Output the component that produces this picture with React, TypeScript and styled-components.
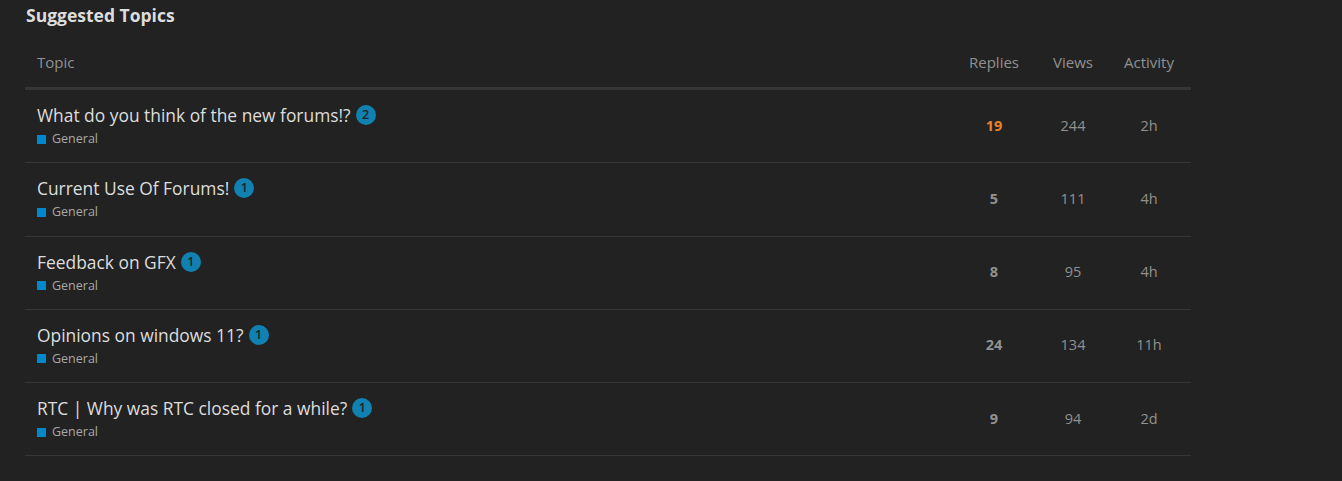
import React from 'react';
import styled, { createGlobalStyle } from 'styled-components';

interface Topic {
  title: string;
  badge: number;
  category: string;
  replies: number;
  views: number;
  activity: string;
  hot?: boolean;
}

const topics: Topic[] = [
  { title: 'What do you think of the new forums!?', badge: 2, category: 'General', replies: 19, views: 244, activity: '2h', hot: true },
  { title: 'Current Use Of Forums!', badge: 1, category: 'General', replies: 5, views: 111, activity: '4h' },
  { title: 'Feedback on GFX', badge: 1, category: 'General', replies: 8, views: 95, activity: '4h' },
  { title: 'Opinions on windows 11?', badge: 1, category: 'General', replies: 24, views: 134, activity: '11h' },
  { title: 'RTC | Why was RTC closed for a while?', badge: 1, category: 'General', replies: 9, views: 94, activity: '2d' },
];

const GlobalStyle = createGlobalStyle`
  html, body {
    margin: 0;
    background: #222222;
  }
  body {
    font-family: "Open Sans", Lato, "Noto Sans", sans-serif;
    color: #dddddd;
  }
`;

const Wrapper = styled.div`
  padding: 5px 0 0 25px;
  width: 1166px;
`;

const Heading = styled.h3`
  margin: 0 0 0 1px;
  font-size: 17.5px;
  line-height: 20px;
  font-weight: 700;
  color: #dddddd;
`;

const Row = styled.div<{ $head?: boolean }>`
  display: grid;
  grid-template-columns: 1fr 80px 78px 79px;
  align-items: center;
  border-bottom: ${p => (p.$head ? '3px solid #363636' : '1px solid #363636')};
`;

const HeadCell = styled.div<{ $first?: boolean; $shift?: number }>`
  padding: 27px ${p => p.$shift ?? 0}px 15px ${p => (p.$first ? 12 : 0)}px;
  text-align: ${p => (p.$first ? 'left' : 'center')};
  font-size: 15px;
  line-height: 20px;
  color: #919191;
`;

const TopicCell = styled.div`
  padding: 14px 12px 14.25px;
`;

const TitleLine = styled.div`
  display: flex;
  align-items: center;
  gap: 5px;
  font-size: 17.4px;
  line-height: 22px;
  color: #dddddd;
`;

const Badge = styled.span`
  display: inline-flex;
  align-items: center;
  justify-content: center;
  width: 20px;
  height: 20px;
  border-radius: 50%;
  background: #1081b0;
  color: #222222;
  font-size: 12.5px;
  font-weight: 600;
`;

const Category = styled.div`
  margin-top: 4px;
  display: flex;
  align-items: center;
  gap: 6px;
  font-size: 12.5px;
  line-height: 18px;
  color: #a8a8a8;
`;

const Swatch = styled.span`
  width: 9px;
  height: 9px;
  background: #0088cc;
`;

const NumCell = styled.div<{ $bold?: boolean; $hot?: boolean; $shift?: number }>`
  text-align: center;
  font-size: 14.5px;
  font-weight: ${p => (p.$bold ? 700 : 400)};
  color: ${p => (p.$hot ? '#e8812b' : '#919191')};
  padding-bottom: 2px;
  padding-right: ${p => p.$shift ?? 0}px;
`;

export default function App() {
  return (
    <>
      <GlobalStyle />
      <Wrapper>
        <Heading>Suggested Topics</Heading>
        <Row $head>
          <HeadCell $first>Topic</HeadCell>
          <HeadCell>Replies</HeadCell>
          <HeadCell>Views</HeadCell>
          <HeadCell $shift={5}>Activity</HeadCell>
        </Row>
        {topics.map(t => (
          <Row key={t.title}>
            <TopicCell>
              <TitleLine>
                <span>{t.title}</span>
                <Badge>{t.badge}</Badge>
              </TitleLine>
              <Category>
                <Swatch />
                {t.category}
              </Category>
            </TopicCell>
            <NumCell $bold $hot={t.hot}>{t.replies}</NumCell>
            <NumCell>{t.views}</NumCell>
            <NumCell $shift={5}>{t.activity}</NumCell>
          </Row>
        ))}
      </Wrapper>
    </>
  );
}
